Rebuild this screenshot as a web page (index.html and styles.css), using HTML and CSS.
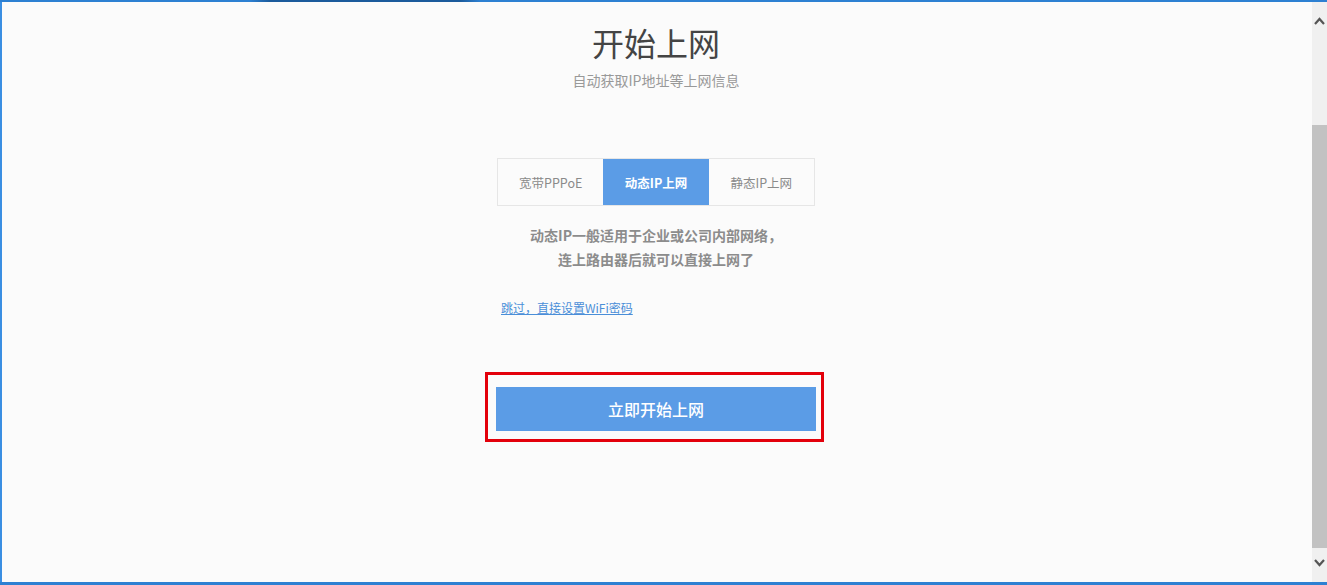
FILE: index.html
```html
<!DOCTYPE html>
<html lang="zh-CN">
<head>
<meta charset="utf-8">
<title>开始上网</title>
<link rel="stylesheet" href="styles.css">
</head>
<body>
<div class="window">
  <div class="topbar"></div>
  <div class="frame">
    <div class="leftbar"></div>
    <main class="content">
      <div class="panel">
        <h1 class="title">开始上网</h1>
        <p class="subtitle">自动获取IP地址等上网信息</p>
        <div class="tabs">
          <div class="tab">宽带PPPoE</div>
          <div class="tab active">动态IP上网</div>
          <div class="tab">静态IP上网</div>
        </div>
        <p class="desc">动态IP一般适用于企业或公司内部网络，<br>连上路由器后就可以直接上网了</p>
        <div class="skip"><a href="#" class="skip-link">跳过，直接设置WiFi密码</a></div>
        <div class="btn-wrap">
          <button class="start-btn">立即开始上网</button>
          <div class="highlight"></div>
        </div>
      </div>
    </main>
    <div class="scrollbar">
      <div class="sb-up"><svg width="11" height="8" viewBox="0 0 11 8"><path d="M1 7 L5.5 2 L10 7" fill="none" stroke="#555" stroke-width="2.2"/></svg></div>
      <div class="sb-gap"></div>
      <div class="sb-thumb"></div>
      <div class="sb-rest"></div>
      <div class="sb-down"><svg width="11" height="8" viewBox="0 0 11 8"><path d="M1 1 L5.5 6 L10 1" fill="none" stroke="#555" stroke-width="2.2"/></svg></div>
    </div>
  </div>
  <div class="bottombar"></div>
</div>
</body>
</html>
```
FILE: styles.css
```css
html, body {
  margin: 0;
  padding: 0;
  height: 100%;
  overflow: hidden;
  background: #fbfbfb;
  font-family: "Noto Sans CJK SC", "Noto Sans", sans-serif;
}

.window {
  width: 1327px;
  height: 585px;
  display: flex;
  flex-direction: column;
}

.topbar {
  height: 2px;
  flex: none;
  background: linear-gradient(to right, #2d80d2 0px, #2d80d2 250px, #1b5b9c 270px, #1b5b9c 460px, #2d80d2 480px, #2d80d2 100%);
}

.frame {
  flex: 1;
  display: flex;
  min-height: 0;
}

.leftbar {
  width: 2px;
  flex: none;
  background: #3a8ee2;
}

.content {
  flex: 1;
  background: #fbfbfb;
  display: flex;
  justify-content: center;
}

.panel {
  width: 320px;
  margin-right: 2px;
  padding-top: 20px;
  display: flex;
  flex-direction: column;
  align-items: center;
}

.title {
  margin: 0;
  font-size: 32px;
  line-height: 40px;
  font-weight: normal;
  color: #444;
  white-space: nowrap;
}

.subtitle {
  margin: 8px 0 0;
  font-size: 14px;
  line-height: 20px;
  color: #999;
  white-space: nowrap;
}

.tabs {
  margin-top: 68px;
  width: 316px;
  display: flex;
  border: 1px solid #e6e6e6;
  background: #fbfbfb;
}

.tab {
  flex: 1;
  height: 46px;
  display: flex;
  align-items: center;
  justify-content: center;
  font-size: 12.5px;
  color: #8a8a8a;
}

.tab.active {
  background: #5b9ce6;
  color: #fff;
  font-weight: bold;
}

.desc {
  margin: 17px 0 0;
  font-size: 14px;
  line-height: 24px;
  font-weight: bold;
  color: #8c8c8c;
  text-align: center;
  white-space: nowrap;
}

.skip {
  align-self: stretch;
  margin-top: 25px;
  padding-left: 5px;
  line-height: 20px;
}

.skip-link {
  font-size: 12px;
  color: #4a8ed8;
  text-decoration: underline;
}

.btn-wrap {
  position: relative;
  margin-top: 69px;
  align-self: stretch;
}

.start-btn {
  display: block;
  width: 320px;
  height: 44px;
  border: none;
  background: #5b9ce6;
  color: #fff;
  font-family: "Noto Sans CJK SC", "Noto Sans", sans-serif;
  font-size: 16px;
  font-weight: 500;
  padding: 0;
}

.highlight {
  position: absolute;
  left: -11px;
  top: -15px;
  width: 333px;
  height: 64px;
  border: 3px solid #e3000b;
  pointer-events: none;
}

.scrollbar {
  width: 15px;
  flex: none;
  background: #f0f0f0;
  display: flex;
  flex-direction: column;
}

.sb-up {
  height: 40px;
  flex: none;
  display: flex;
  justify-content: center;
  padding-top: 15px;
  box-sizing: border-box;
}

.sb-gap {
  height: 83px;
  flex: none;
}

.sb-thumb {
  height: 423px;
  flex: none;
  background: #c2c2c2;
}

.sb-rest {
  flex: 1;
}

.sb-down {
  height: 30px;
  flex: none;
  display: flex;
  justify-content: center;
  padding-top: 7px;
  box-sizing: border-box;
}

.bottombar {
  height: 3px;
  flex: none;
  background: #2d80d2;
}
```
